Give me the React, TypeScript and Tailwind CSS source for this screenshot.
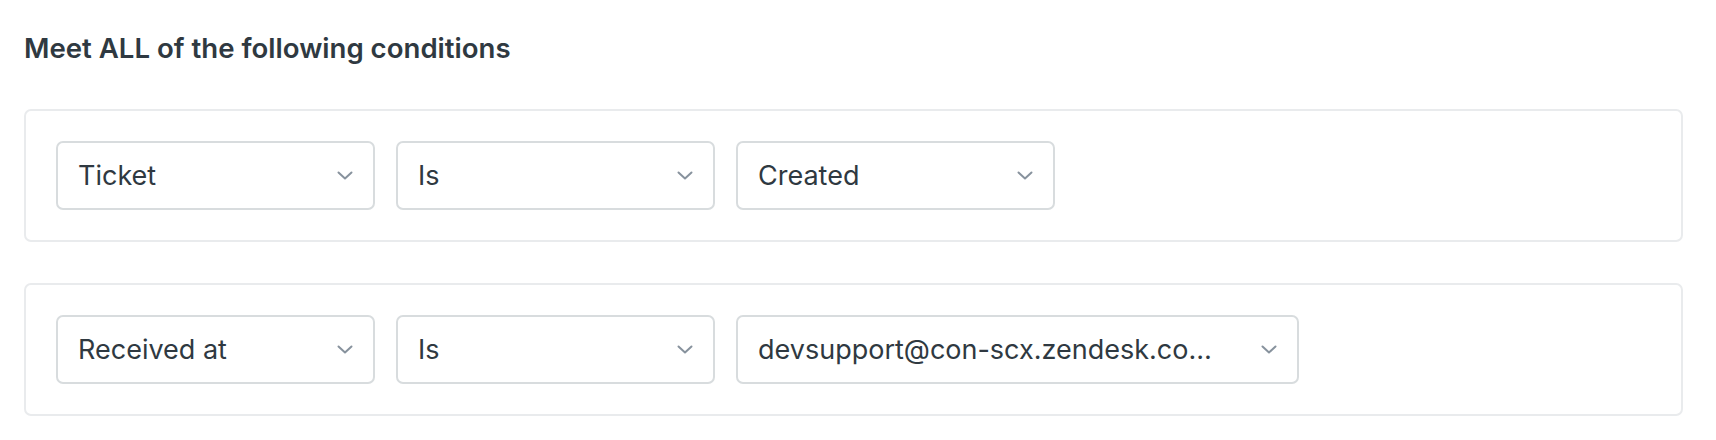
import React from 'react';

type Cond = { field: string; op: string; value: string; valueWidth: string };

const rows: Cond[] = [
  { field: 'Ticket', op: 'Is', value: 'Created', valueWidth: 'w-[319px]' },
  { field: 'Received at', op: 'Is', value: 'devsupport@con-scx.zendesk.co…', valueWidth: 'w-[563px]' },
];

function Chevron() {
  return (
    <svg width="16" height="9" viewBox="0 0 16 9" fill="none" className="shrink-0">
      <polyline points="1.5,1.5 8,7.5 14.5,1.5" stroke="#87929d" strokeWidth="2" strokeLinecap="round" strokeLinejoin="round" />
    </svg>
  );
}

function Select({ label, width = 'w-[319px]' }: { label: string; width?: string }) {
  return (
    <div
      className={`${width} h-[69px] shrink-0 flex items-center justify-between gap-4 rounded-[7px] border-2 border-[#d8dcde] pl-[20px] pr-[20px] bg-white`}
    >
      <span className="text-[27px] leading-[32px] text-[#2f3941] whitespace-nowrap overflow-hidden">{label}</span>
      <Chevron />
    </div>
  );
}

export default function App() {
  return (
    <div className="w-[1716px] h-[440px] bg-white pl-[24px] pt-[32px] font-['Inter',sans-serif]">
      <h2 className="text-[27.6px] leading-[32px] font-semibold text-[#2f3941]">Meet ALL of the following conditions</h2>
      <div className="mt-[45px] flex flex-col gap-[41px] w-[1659px]">
        {rows.map((r) => (
          <div key={r.field} className="rounded-[7px] border-2 border-[#e9ebed] p-[30px] flex gap-[21px]">
            <Select label={r.field} />
            <Select label={r.op} />
            <Select label={r.value} width={r.valueWidth} />
          </div>
        ))}
      </div>
    </div>
  );
}
